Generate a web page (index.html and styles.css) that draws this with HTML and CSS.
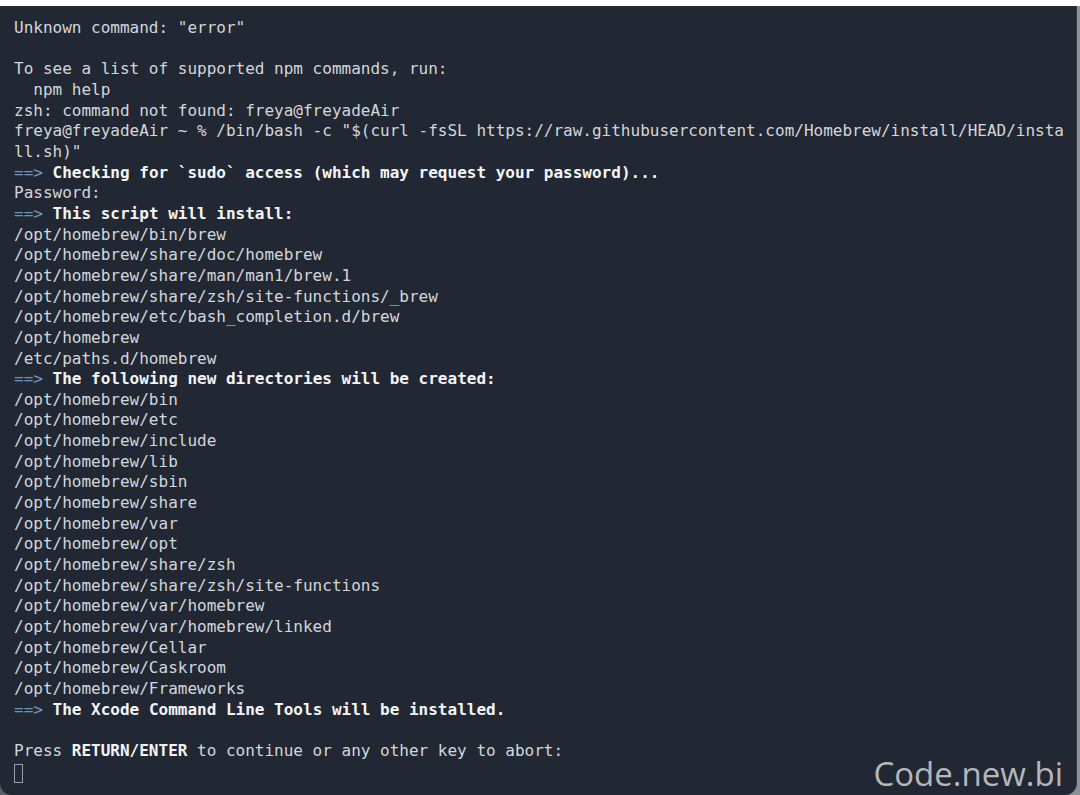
FILE: index.html
```html
<!DOCTYPE html>
<html>
<head>
<meta charset="utf-8">
<link rel="stylesheet" href="styles.css">
</head>
<body>
<div class="frame">
  <div class="term">
    <div class="ln">Unknown command: "error"</div>
    <div class="ln"> </div>
    <div class="ln">To see a list of supported npm commands, run:</div>
    <div class="ln">  npm help</div>
    <div class="ln">zsh: command not found: freya@freyadeAir</div>
    <div class="ln">freya@freyadeAir ~ % /bin/bash -c "$(curl -fsSL https://raw.githubusercontent.com/Homebrew/install/HEAD/insta</div>
    <div class="ln">ll.sh)"</div>
    <div class="ln"><span class="arr">==&gt;</span> <b>Checking for `sudo` access (which may request your password)...</b></div>
    <div class="ln">Password:</div>
    <div class="ln"><span class="arr">==&gt;</span> <b>This script will install:</b></div>
    <div class="ln">/opt/homebrew/bin/brew</div>
    <div class="ln">/opt/homebrew/share/doc/homebrew</div>
    <div class="ln">/opt/homebrew/share/man/man1/brew.1</div>
    <div class="ln">/opt/homebrew/share/zsh/site-functions/_brew</div>
    <div class="ln">/opt/homebrew/etc/bash_completion.d/brew</div>
    <div class="ln">/opt/homebrew</div>
    <div class="ln">/etc/paths.d/homebrew</div>
    <div class="ln"><span class="arr">==&gt;</span> <b>The following new directories will be created:</b></div>
    <div class="ln">/opt/homebrew/bin</div>
    <div class="ln">/opt/homebrew/etc</div>
    <div class="ln">/opt/homebrew/include</div>
    <div class="ln">/opt/homebrew/lib</div>
    <div class="ln">/opt/homebrew/sbin</div>
    <div class="ln">/opt/homebrew/share</div>
    <div class="ln">/opt/homebrew/var</div>
    <div class="ln">/opt/homebrew/opt</div>
    <div class="ln">/opt/homebrew/share/zsh</div>
    <div class="ln">/opt/homebrew/share/zsh/site-functions</div>
    <div class="ln">/opt/homebrew/var/homebrew</div>
    <div class="ln">/opt/homebrew/var/homebrew/linked</div>
    <div class="ln">/opt/homebrew/Cellar</div>
    <div class="ln">/opt/homebrew/Caskroom</div>
    <div class="ln">/opt/homebrew/Frameworks</div>
    <div class="ln"><span class="arr">==&gt;</span> <b>The Xcode Command Line Tools will be installed.</b></div>
    <div class="ln"> </div>
    <div class="ln">Press <b>RETURN/ENTER</b> to continue or any other key to abort:</div>
    <div class="ln"><span class="cursor"></span></div>
  </div>
  <div class="mark">Code.new.bi</div>
</div>
</body>
</html>
```

FILE: styles.css
```css
html, body {
  margin: 0;
  padding: 0;
  background: #ffffff;
}
body {
  width: 1080px;
  height: 795px;
  overflow: hidden;
}
.frame {
  position: relative;
  margin-top: 6px;
  height: 789px;
  background: linear-gradient(to right, #5a5f66 0, #8d9198 100%);
}
.term {
  height: 789px;
  box-sizing: border-box;
  margin-right: 3px;
  background: #222833;
  border-top: 1px solid #2b2f3c;
  border-right: 1px solid #333a46;
  border-radius: 0 0 12px 12px;
  padding: 11px 0 0 14px;
  font-family: "DejaVu Sans Mono", "Liberation Mono", monospace;
  font-size: 16px;
  line-height: 20.66px;
  color: #d3d6db;
}
.ln {
  white-space: pre;
  height: 20.66px;
}
.ln b {
  color: #f4f5f7;
  font-weight: bold;
}
.arr {
  color: #6f93bd;
}
.cursor {
  display: inline-block;
  width: 7px;
  height: 17px;
  margin-top: 2px;
  border: 1.5px solid #9aa0a8;
  vertical-align: top;
}
.mark {
  position: absolute;
  right: 17px;
  bottom: 3px;
  font-family: "Open Sans", "Noto Sans", sans-serif;
  font-size: 33px;
  color: #b4b7bc;
  line-height: 1.1;
}
```
